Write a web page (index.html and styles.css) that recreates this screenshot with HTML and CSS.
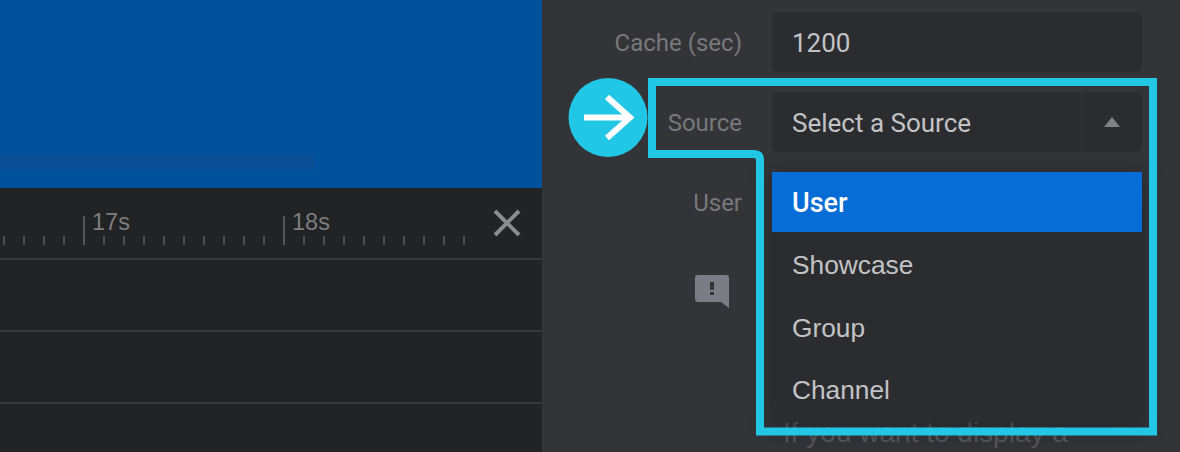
FILE: index.html
```html
<!DOCTYPE html>
<html lang="en">
<head>
  <meta charset="UTF-8" />
  <title>Source settings</title>
  <link rel="stylesheet" href="styles.css">
</head>
<body>

  <div class="editor">

    <!-- Preview and timeline -->
    <div class="stage">
      <div class="preview"><div class="preview-band"></div></div>
      <div class="ruler">
        <div class="ruler-lead"></div>
        <div class="ruler-sec">17s</div>
        <div class="ruler-sec">18s</div>
        <svg class="close-icon" width="28" height="28" viewBox="0 0 28 28" aria-label="Close">
          <path d="M2 2 L26 26 M26 2 L2 26" />
        </svg>
      </div>
      <div class="track"></div>
      <div class="track"></div>
      <div class="track track-last"></div>
    </div>

    <!-- Settings form -->
    <div class="settings">
      <div class="row">
        <label>Cache (sec)</label>
        <div class="field">1200</div>
      </div>
      <div class="row">
        <label>Source</label>
        <div class="select">
          <div class="select-value">Select a Source</div>
          <div class="select-arrow"><span class="triangle"></span></div>
          <ul class="dropdown">
            <li class="active">User</li>
            <li>Showcase</li>
            <li>Group</li>
            <li>Channel</li>
          </ul>
        </div>
      </div>
      <div class="row">
        <label>User</label>
        <div class="field"></div>
      </div>
      <div class="note">
        <div class="note-icon">
          <svg width="34" height="34" viewBox="0 0 34 34">
            <path class="bubble" d="M3 0 H31 Q34 0 34 3 V33 L26 27 H3 Q0 27 0 24 V3 Q0 0 3 0 Z" />
            <path class="bubble-mark" d="M15 7 H19 V15 H15 Z M15 17 H19 V20 H15 Z" />
          </svg>
        </div>
        <p class="note-text">If you want to display a</p>
      </div>
    </div>

  </div>

  <!-- Callout drawn over the screenshot -->
  <svg class="callout" width="1180" height="452" viewBox="0 0 1180 452">
    <path class="callout-line" d="M652 82 H1153 V431.5 H760 V160 Q760 154 754 154 H652 Z" />
    <circle class="callout-dot" cx="608" cy="117.5" r="39.5" />
    <path class="callout-arrow" d="M584 117.5 H629 M607 97 L630 117.5 L607 138" />
  </svg>

</body>
</html>
```

FILE: styles.css
```css
* {
  box-sizing: border-box;
  margin: 0;
  padding: 0;
}

html, body {
  width: 1180px;
  height: 452px;
  overflow: hidden;
}

body {
  background: #333438;
  font-family: Roboto, sans-serif;
  position: relative;
}

.editor {
  display: flex;
  height: 452px;
}

/* Preview and timeline */
.stage {
  width: 542px;
  background: #222325;
  flex-shrink: 0;
}

.preview {
  height: 188px;
  background: #00519b;
  display: flex;
  align-items: flex-end;
  padding-bottom: 18px;
}

.preview-band {
  width: 315px;
  height: 15px;
  background: #0a4e95;
}

.ruler {
  height: 70px;
  display: flex;
  align-items: flex-end;
  padding-bottom: 13px;
  position: relative;
  font-family: "Liberation Sans", sans-serif;
}

.ruler-lead {
  width: 83px;
  height: 9px;
  background: repeating-linear-gradient(to left, transparent 0, transparent 18px, #4d4e51 18px, #4d4e51 20px);
}

.ruler-sec {
  width: 200px;
  height: 29px;
  padding-left: 7px;
  border-left: 2px solid #55565a;
  color: #7c7d80;
  font-size: 23.5px;
  line-height: 13px;
  background-image: repeating-linear-gradient(to right, transparent 0, transparent 18px, #4d4e51 18px, #4d4e51 20px);
  background-size: 100% 9px;
  background-repeat: no-repeat;
  background-position: bottom;
}

.close-icon {
  position: absolute;
  left: 493px;
  top: 21px;
}

.close-icon path {
  fill: none;
  stroke: #8b8c90;
  stroke-width: 4;
}

.track {
  height: 72px;
  border-top: 2px solid #37383b;
}

.track-last {
  height: 50px;
}

/* Settings form */
.settings {
  flex: 1;
  padding: 12px 38px 0 0;
  display: flex;
  flex-direction: column;
  gap: 20px;
}

.row {
  display: flex;
  height: 60px;
  align-items: center;
  gap: 30px;
}

.row label {
  width: 200px;
  padding-top: 2px;
  text-align: right;
  color: #77787b;
  font-size: 24px;
}

.field {
  width: 370px;
  height: 60px;
  padding-left: 20px;
  background: #2b2c30;
  border-radius: 6px;
  color: #c2c3c6;
  font-size: 26px;
  line-height: 62px;
}

.select {
  width: 370px;
  height: 60px;
  display: flex;
  position: relative;
  background: #2b2c30;
  border-radius: 6px;
  color: #c2c3c6;
  font-size: 26px;
  line-height: 62px;
}

.select-value {
  flex: 1;
  padding-left: 20px;
}

.select-arrow {
  width: 61px;
  border-left: 1px solid #333438;
  display: flex;
  align-items: center;
  justify-content: center;
}

.triangle {
  width: 0;
  height: 0;
  border-left: 8px solid transparent;
  border-right: 8px solid transparent;
  border-bottom: 10px solid #808185;
}

.dropdown {
  list-style: none;
  position: absolute;
  top: 80px;
  left: 0;
  width: 370px;
  height: 250px;
  background: #2b2c30;
  font-family: "Liberation Sans", sans-serif;
  box-shadow: 0 6px 24px rgba(0, 0, 0, 0.3);
  z-index: 2;
}

.dropdown li {
  height: 62.5px;
  line-height: 66.5px;
  padding-left: 20px;
  font-size: 26.3px;
}

.dropdown li.active {
  height: 60px;
  line-height: 62px;
  background: #066dd6;
  color: #fff;
  font-family: Roboto, sans-serif;
  font-size: 27px;
  font-weight: 500;
}

.note {
  display: flex;
  gap: 13px;
  margin-top: 23px;
}

.note-icon {
  width: 187px;
  display: flex;
  justify-content: flex-end;
  flex-shrink: 0;
}

.bubble {
  fill: #7b7c84;
}

.bubble-mark {
  fill: #333438;
}

.note-text {
  padding-left: 41px;
  padding-top: 142px;
  color: #55565a;
  font-family: "Liberation Sans", sans-serif;
  font-size: 28px;
  white-space: nowrap;
}

/* Callout */
.callout {
  position: absolute;
  left: 0;
  top: 0;
  z-index: 3;
}

.callout-line {
  fill: none;
  stroke: #22c7e6;
  stroke-width: 8;
}

.callout-dot {
  fill: #22c7e6;
}

.callout-arrow {
  fill: none;
  stroke: #fff;
  stroke-width: 6;
}
```
